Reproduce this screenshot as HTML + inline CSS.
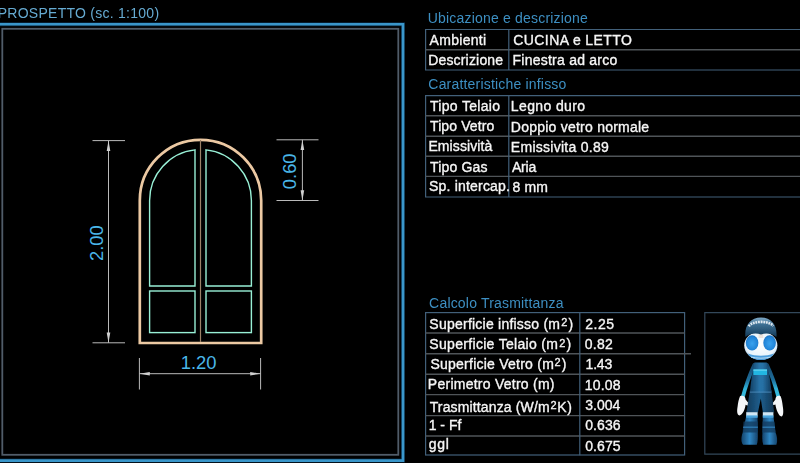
<!DOCTYPE html>
<html lang="it">
<head>
<meta charset="utf-8">
<title>Prospetto infisso</title>
<style>
html,body{margin:0;padding:0;background:#000;overflow:hidden;}
body{width:800px;height:463px;position:relative;font-family:"Liberation Sans",Arial,sans-serif;}
svg{position:absolute;left:0;top:0;display:block;}
text{font-family:"Liberation Sans",Arial,sans-serif;}
.h{fill:#3d8fc2;font-size:14px;}
.ti{fill:#66abd2;font-size:14px;}
.sp{fill:#f6f6f6;font-size:11px;stroke:#f6f6f6;stroke-width:0.3;}
.w{fill:#f6f6f6;font-size:14px;stroke:#f6f6f6;stroke-width:0.35;}
.d{fill:#4ab6e8;font-size:18.4px;}
.gl{stroke:#4f5458;stroke-width:1.4;fill:none;}
.bl{stroke:#42607a;stroke-width:1.2;fill:none;}
.dim{stroke:#bababa;stroke-width:1;fill:none;}
.arr{fill:#d0d0d0;stroke:none;}
</style>
</head>
<body>
<svg width="800" height="463" viewBox="0 0 800 463">
<defs>
<filter id="soft" x="-5%" y="-5%" width="110%" height="110%"><feGaussianBlur stdDeviation="0.35"/></filter>
<filter id="tsoft" x="-2%" y="-2%" width="104%" height="104%"><feGaussianBlur stdDeviation="0.4"/></filter>
<filter id="soft2" x="-10%" y="-10%" width="120%" height="120%"><feGaussianBlur stdDeviation="0.7"/></filter>
</defs>
<rect x="0" y="0" width="800" height="463" fill="#000"/>

<!-- LEFT PANEL -->
<g id="left">
<g filter="url(#tsoft)"><text class="ti" x="-2.25" y="18.00" textLength="161.32" lengthAdjust="spacing">PROSPETTO (sc. 1:100)</text></g>
<path d="M0 24.3 H403 V460.6 H0" fill="none" stroke="#0b3554" stroke-width="4" opacity="0.7"/>
<path d="M0 24.3 H403 V460.6 H0" fill="none" stroke="#3a96ca" stroke-width="2.6"/>
<rect x="2.3" y="28.8" width="396" height="426" fill="none" stroke="#505c69" stroke-width="1.8"/>

<!-- window frame -->
<g filter="url(#soft)">
<path d="M139.8 343 V200.5 A60.7 60.7 0 0 1 261.2 200.5 V343 Z" fill="none" stroke="#ecc9a3" stroke-width="2.7" stroke-linejoin="miter"/>
<line x1="200.5" y1="140" x2="200.5" y2="342" stroke="#9c8268" stroke-width="1.2"/>
<!-- glass -->
<g fill="none" stroke="#98f0d6" stroke-width="1.4">
<path d="M149.6 286 V200.5 A50.9 50.9 0 0 1 195 149.9 V286 Z"/>
<path d="M251.4 286 V200.5 A50.9 50.9 0 0 0 206 149.9 V286 Z"/>
<rect x="149.6" y="291" width="45.4" height="41.6"/>
<rect x="206" y="291" width="45.4" height="41.6"/>
</g>
</g>

<!-- dimensions -->
<g class="dim">
<line x1="92.5" y1="140.6" x2="125" y2="140.6"/>
<line x1="92.5" y1="342.8" x2="125" y2="342.8"/>
<line x1="108.5" y1="140.6" x2="108.5" y2="342.8"/>
<line x1="276.5" y1="139.8" x2="318.5" y2="139.8"/>
<line x1="276.5" y1="200.5" x2="318.5" y2="200.5"/>
<line x1="302.4" y1="139.8" x2="302.4" y2="200.5"/>
<line x1="139.4" y1="358" x2="139.4" y2="389.5"/>
<line x1="260.6" y1="358" x2="260.6" y2="389.5"/>
<line x1="139.4" y1="373.7" x2="260.6" y2="373.7"/>
</g>
<g class="arr">
<path d="M108.5 140.6 L106.7 151 H110.3 Z"/>
<path d="M108.5 342.8 L106.7 332.4 H110.3 Z"/>
<path d="M302.4 139.8 L300.6 150 H304.2 Z"/>
<path d="M302.4 200.5 L300.6 190.3 H304.2 Z"/>
<path d="M139.4 373.7 L149.8 371.9 V375.5 Z"/>
<path d="M260.6 373.7 L250.2 371.9 V375.5 Z"/>
</g>
<text class="d" x="198.6" y="369.2" text-anchor="middle">1.20</text>
<text class="d" transform="translate(102.9 243.2) rotate(-90)" text-anchor="middle">2.00</text>
<text class="d" transform="translate(295.8 171.3) rotate(-90)" text-anchor="middle">0.60</text>
</g>

<!-- RIGHT: tables -->
<g id="t1">
<path class="bl" d="M800 29.5 H425.6 V70 H800"/>
<path class="gl" d="M425.6 49.8 H800"/>
<path class="bl" d="M508.8 29.5 V70"/>
</g>

<g id="t2">
<path class="bl" d="M800 95.6 H425.6 V197 H800"/>
<path class="gl" d="M425.6 115.8 H800 M425.6 136.2 H800 M425.6 156.3 H800 M425.6 176.4 H800"/>
<path class="bl" d="M508.8 95.6 V197"/>
</g>

<g id="t3">
<rect class="bl" x="425.6" y="312.6" width="259" height="142.4"/>
<path class="gl" d="M425.6 333 H684.6 M425.6 353.8 H691 M425.6 374.2 H684.6 M425.6 394.6 H684.6 M425.6 415.6 H684.6 M425.6 436 H684.6"/>
<path class="bl" d="M579.8 312.6 V455.2"/>
</g>

<g id="rtext" filter="url(#tsoft)">
<text class="h" x="427.72" y="23.40" textLength="160.10" lengthAdjust="spacing">Ubicazione e descrizione</text>
<text class="w" x="429.57" y="44.90" textLength="56.57" lengthAdjust="spacing">Ambienti</text>
<text class="w" x="513.34" y="44.90" textLength="118.43" lengthAdjust="spacing">CUCINA e LETTO</text>
<text class="w" x="428.15" y="64.60" textLength="74.97" lengthAdjust="spacing">Descrizione</text>
<text class="w" x="512.55" y="64.90" textLength="104.74" lengthAdjust="spacing">Finestra ad arco</text>
<text class="h" x="428.34" y="89.40" textLength="137.95" lengthAdjust="spacing">Caratteristiche infisso</text>
<text class="w" x="429.99" y="110.50" textLength="70.10" lengthAdjust="spacing">Tipo Telaio</text>
<text class="w" x="510.85" y="111.30" textLength="74.24" lengthAdjust="spacing">Legno duro</text>
<text class="w" x="429.99" y="130.60" textLength="64.30" lengthAdjust="spacing">Tipo Vetro</text>
<text class="w" x="510.85" y="131.80" textLength="138.27" lengthAdjust="spacing">Doppio vetro normale</text>
<text class="w" x="428.45" y="151.20" textLength="63.75" lengthAdjust="spacing">Emissività</text>
<text class="w" x="510.85" y="152.00" textLength="97.91" lengthAdjust="spacing">Emissivita 0.89</text>
<text class="w" x="429.99" y="171.80" textLength="57.42" lengthAdjust="spacing">Tipo Gas</text>
<text class="w" x="511.97" y="171.80" textLength="24.23" lengthAdjust="spacing">Aria</text>
<text class="w" x="428.96" y="191.30" textLength="81.01" lengthAdjust="spacing">Sp. intercap.</text>
<text class="w" x="512.59" y="191.90" textLength="35.23" lengthAdjust="spacing">8 mm</text>
<text class="h" x="429.09" y="308.40" textLength="134.36" lengthAdjust="spacing">Calcolo Trasmittanza</text>
<text class="w" x="429.36" y="328.90" textLength="130.66" lengthAdjust="spacing">Superficie infisso (m</text><text class="sp" x="561.25" y="326.30" textLength="6.71" lengthAdjust="spacing">2</text><text class="w" x="568.62" y="328.90" textLength="4.45" lengthAdjust="spacing">)</text>
<text class="w" x="585.20" y="329.20" textLength="28.79" lengthAdjust="spacing">2.25</text>
<text class="w" x="429.36" y="349.40" textLength="128.56" lengthAdjust="spacing">Superficie Telaio (m</text><text class="sp" x="559.15" y="346.80" textLength="6.71" lengthAdjust="spacing">2</text><text class="w" x="566.52" y="349.40" textLength="4.45" lengthAdjust="spacing">)</text>
<text class="w" x="584.75" y="349.40" textLength="27.95" lengthAdjust="spacing">0.82</text>
<text class="w" x="430.46" y="368.90" textLength="123.36" lengthAdjust="spacing">Superficie Vetro (m</text><text class="sp" x="554.55" y="366.30" textLength="6.91" lengthAdjust="spacing">2</text><text class="w" x="561.72" y="368.90" textLength="4.45" lengthAdjust="spacing">)</text>
<text class="w" x="585.53" y="369.40" textLength="26.68" lengthAdjust="spacing">1.43</text>
<text class="w" x="427.85" y="389.20" textLength="126.62" lengthAdjust="spacing">Perimetro Vetro (m)</text>
<text class="w" x="584.63" y="389.60" textLength="35.97" lengthAdjust="spacing">10.08</text>
<text class="w" x="429.69" y="411.50" textLength="119.94" lengthAdjust="spacing">Trasmittanza (W/m</text><text class="sp" x="550.50" y="408.60" textLength="7.16" lengthAdjust="spacing">2</text><text class="w" x="557.25" y="411.50" textLength="14.72" lengthAdjust="spacing">K)</text>
<text class="w" x="585.17" y="409.60" textLength="35.24" lengthAdjust="spacing">3.004</text>
<text class="w" x="428.63" y="430.20" textLength="32.75" lengthAdjust="spacing">1 - Ff</text>
<text class="w" x="585.15" y="430.30" textLength="35.46" lengthAdjust="spacing">0.636</text>
<text class="w" x="428.71" y="449.00" textLength="20.12" lengthAdjust="spacing">ggl</text>
<text class="w" x="585.15" y="450.60" textLength="35.43" lengthAdjust="spacing">0.675</text>
</g>

<!-- robot box -->
<g id="robot">
<path d="M800 312.6 H704.8 V454.2 H800" fill="none" stroke="#33485a" stroke-width="1.2"/>
<defs>
<linearGradient id="armL" x1="0" y1="0" x2="0" y2="1"><stop offset="0" stop-color="#17486e"/><stop offset="0.45" stop-color="#1d6f9c"/><stop offset="0.7" stop-color="#2fb0d6"/><stop offset="1" stop-color="#3cc0e0"/></linearGradient>
<linearGradient id="torso" x1="0" y1="0" x2="1" y2="0"><stop offset="0" stop-color="#123f63"/><stop offset="0.45" stop-color="#2873a8"/><stop offset="0.6" stop-color="#2670a4"/><stop offset="1" stop-color="#113a5c"/></linearGradient>
<linearGradient id="pants" x1="0" y1="0" x2="1" y2="0"><stop offset="0" stop-color="#113a5a"/><stop offset="0.5" stop-color="#1f5f8e"/><stop offset="1" stop-color="#103552"/></linearGradient>
<linearGradient id="boot" x1="0" y1="0" x2="1" y2="0"><stop offset="0" stop-color="#15446c"/><stop offset="0.5" stop-color="#2f86c4"/><stop offset="1" stop-color="#15446c"/></linearGradient>
<radialGradient id="face" cx="0.5" cy="0.45" r="0.6"><stop offset="0" stop-color="#ffffff"/><stop offset="0.75" stop-color="#eaf4fb"/><stop offset="1" stop-color="#9cc4e0"/></radialGradient>
<radialGradient id="eye" cx="0.5" cy="0.55" r="0.6"><stop offset="0" stop-color="#3aa2ee"/><stop offset="0.7" stop-color="#2285d8"/><stop offset="1" stop-color="#1a68b4"/></radialGradient>
<linearGradient id="cap" x1="0" y1="0" x2="0" y2="1"><stop offset="0" stop-color="#7fa9c6"/><stop offset="0.35" stop-color="#3d6f93"/><stop offset="1" stop-color="#143a58"/></linearGradient>
</defs>
<g filter="url(#soft2)">
<!-- arms -->
<path d="M754.2 365 C750 374 745.4 387 742.4 398.5" fill="none" stroke="url(#armL)" stroke-width="3.8" stroke-linecap="round"/>
<path d="M767 365 C771.4 374 775.8 387 778.8 398.5" fill="none" stroke="url(#armL)" stroke-width="3.8" stroke-linecap="round"/>
<!-- hands -->
<path d="M740 396.2 C743 395 745.6 396.4 745.6 399.6 L748.8 403.4 C749.4 405.4 747.4 406 745.6 404.8 C745 409.5 742.6 415 739.4 415.4 C737 415.2 736.8 411 737.6 406.6 C738 402.5 738.8 399 740 396.2 Z" fill="#f4f6f8"/>
<path d="M780.6 396.2 C777.8 395 775.4 396.4 775.4 399.6 L772.6 403.2 C772.2 405 774 405.6 775.4 404.6 C776.2 410 778.6 416 781.4 416.6 C783.6 416.2 783.6 411.5 782.8 406.6 C782.4 402.5 781.8 399 780.6 396.2 Z" fill="#f4f6f8"/>
<!-- legs -->
<path d="M750 390 H771.4 L774.2 412.6 H762.9 L760.8 398.6 L757.9 412.6 H746.4 Z" fill="url(#pants)"/>
<!-- boots -->
<path d="M746.2 416 H757.6 L757.8 433 C758 438 757.8 442 756.8 444.8 H743 C740.6 441.4 741.2 436 743 432 Z" fill="url(#boot)"/>
<path d="M762.8 416 H773.4 L775.4 432 C777.2 436 777.8 441 776.4 444.8 H763.2 C762 441 762.2 437 762.4 433 Z" fill="url(#boot)"/>
<path d="M743.6 421.6 H757.8 V432.6 H742.6 Z" fill="#133c60" opacity="0.8"/>
<path d="M762.6 421.6 H774.4 L775.6 432.6 H762.4 Z" fill="#133c60" opacity="0.8"/>
<path d="M743.2 426.4 H757.8 V428 H743 Z M762.6 426.4 H775 V428 H762.6 Z" fill="#2f7fba" opacity="0.8"/>
<!-- knee bands -->
<rect x="746.2" y="412.2" width="11.4" height="4.2" fill="#cfe7f5"/>
<rect x="762.8" y="412.2" width="10.6" height="4.2" fill="#cfe7f5"/>
<rect x="746.2" y="415.4" width="11.4" height="2.4" fill="#4aa4dc"/>
<rect x="762.8" y="415.4" width="10.6" height="2.4" fill="#4aa4dc"/>
<!-- torso -->
<path d="M754.4 362.6 H766.8 C768.8 372 770.6 382 771.6 392.6 H749.8 C750.8 382 752.4 372 754.4 362.6 Z" fill="url(#torso)"/>
<rect x="753.4" y="369.4" width="13.6" height="5.6" fill="#22b6e2"/>
<rect x="753.4" y="369.4" width="13.6" height="1.6" fill="#5fd2f0" opacity="0.8"/>
<rect x="750" y="391.6" width="21.4" height="1" fill="#4f8fbe" opacity="0.8"/>
<!-- head -->
<ellipse cx="760.8" cy="345.6" rx="16.6" ry="14.2" fill="url(#face)"/>
<path d="M747.6 353.4 C756 356.4 766 356.4 774 353.4 C771 358.4 765.4 360 760.8 360 C756.2 360 750.6 358.4 747.6 353.4 Z" fill="#4f9fdc"/>
<path d="M751 357 C757 358.6 765 358.6 770.6 357" fill="none" stroke="#b8dcf4" stroke-width="1"/>
<ellipse cx="752.1" cy="342.8" rx="6.3" ry="7.6" fill="url(#eye)"/>
<ellipse cx="769.6" cy="342.8" rx="6.3" ry="7.6" fill="url(#eye)"/>
<rect x="758.6" y="334" width="4.6" height="4" fill="#e8d8cc" opacity="0.7"/>
<!-- cap -->
<path d="M745.4 337 C744.2 326 750 317.6 761 317.6 C772 317.6 777.6 326 776.4 337 C772 333.4 766 332.8 761 334.4 C756 332.8 750 333.4 745.4 337 Z" fill="url(#cap)"/>
<path d="M748.8 326.2 C752.4 320.6 769.4 320.4 773.2 326" fill="none" stroke="#f0f5f9" stroke-width="2.6" stroke-dasharray="1.8 0.8" opacity="0.9"/>
</g>
</g>
</svg>
</body>
</html>
